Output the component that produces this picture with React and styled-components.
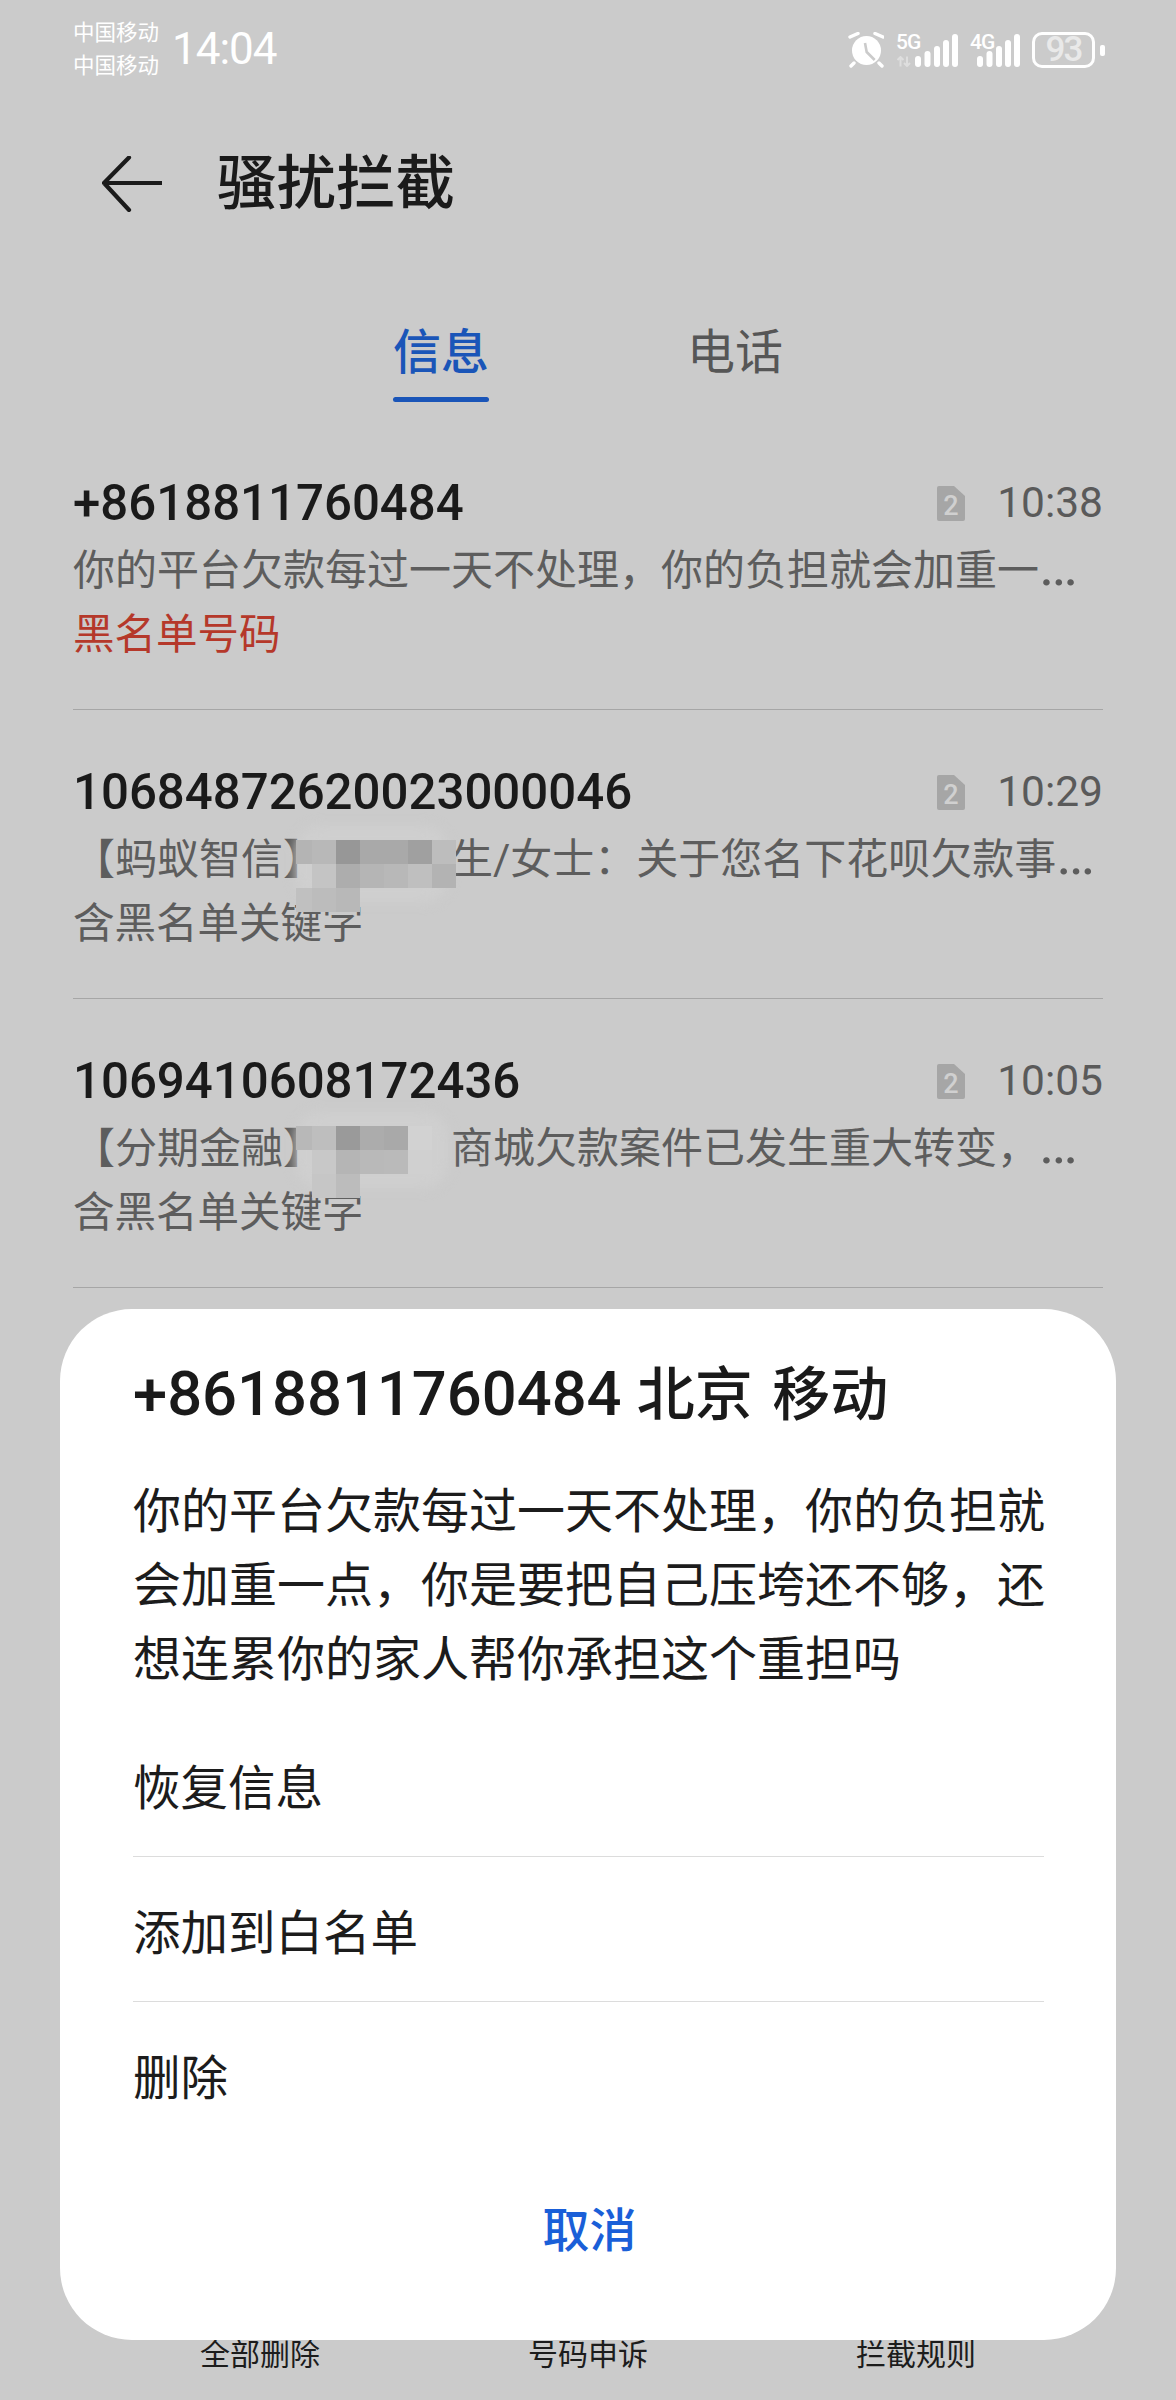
import styled, { createGlobalStyle } from "styled-components";

const __ = "transparent";

const threads = [
  {
    name: "+8618811760484",
    time: "10:38",
    tag: "黑名单号码",
    danger: true,
    lead: "你的平台欠款每过一天不处理，你的负担就会加重一",
  },
  {
    name: "10684872620023000046",
    time: "10:29",
    tag: "含黑名单关键字",
    lead: "【蚂蚁智信】",
    rest: "生/女士：关于您名下花呗欠款事",
    smudgeTop: 130,
    tiles: [
      "#b4b4b4", "#b8b8b8", "#979797", "#a9a9a9", "#a9a9a9", "#a0a0a0", "#bdbdbd",
      __, "#c4c4c4", "#adadad", "#b5b5b5", "#b8b8b8", "#bfbfbf", "#b3b3b3",
      "#c0c0c0", "#bcbcbc", "#b8b8b8", __, __, __, __,
    ],
  },
  {
    name: "1069410608172436",
    time: "10:05",
    tag: "含黑名单关键字",
    lead: "【分期金融】",
    rest: "商城欠款案件已发生重大转变，",
    smudgeTop: 127,
    tiles: [
      "#b8b8b8", "#bebebe", "#9a9a9a", "#acacac", "#a9a9a9", "#d2d2d2", __,
      __, "#c8c8c8", "#b5b5b5", "#b9b9b9", "#bababa", "#d0d0d0", __,
      __, "#c6c6c6", "#bcbcbc", __, __, __, __,
    ],
  },
];

const AlarmIcon = () => (
  <svg width="36" height="36" viewBox="0 0 36 36">
    <circle cx="18.500" cy="18.500" r="14.500" fill="#fff" />
    <path d="M17 11l1.700 9 8 8" fill="none" stroke="#cbcbcb" strokeWidth="2.600" />
    <path d="M2 5l8-3.500M35 5l-8-3.500M6 31l-3 3M31 31l3 3" stroke="#fff" strokeWidth="3.400" strokeLinecap="round" />
  </svg>
);

const SignalBars = () => (
  <svg width="43" height="33" viewBox="0 0 43 33">
    <rect x="0" y="22" width="6" height="11" rx="3" fill="#fff" />
    <rect x="9.500" y="17" width="6" height="16" rx="3" fill="#fff" />
    <rect x="19" y="12" width="6" height="21" rx="3" fill="#fff" />
    <rect x="28" y="6" width="6" height="27" rx="3" fill="#fff" />
    <rect x="37" y="0" width="6" height="33" rx="3" fill="#fff" />
  </svg>
);

const DataArrows = () => (
  <svg width="16" height="11" viewBox="0 0 16 11">
    <path d="M4.500 10.500V1M1.500 4l3-3 3 3M11 .5V10M8 7l3 3 3-3" fill="none" stroke="#dedede" strokeWidth="2" />
  </svg>
);

const SimIcon = () => (
  <svg width="28" height="35" viewBox="0 0 28 35">
    <path d="M2 0h15l11 10v23a2 2 0 0 1-2 2H2a2 2 0 0 1-2-2V2a2 2 0 0 1 2-2z" fill="#a6a6a6" />
    <text x="14" y="29" textAnchor="middle" fontSize="27" fontWeight="500" fontFamily="Roboto, sans-serif" fill="#d0d0d0">
      2
    </text>
  </svg>
);

const BackArrow = () => (
  <svg width="60" height="56" viewBox="0 0 60 56">
    <path d="M59 27H2M27 1.500 2 27l25 27" fill="none" stroke="#1b1b1b" strokeWidth="4.200" strokeLinecap="round" strokeLinejoin="round" />
  </svg>
);

export default function App() {
  return (
    <>
      <GlobalStyle />
      <Screen>
        <StatusBar>
          <Carriers>
            <span>中国移动</span>
            <span>中国移动</span>
          </Carriers>
          <Clock>14:04</Clock>
          <StatusIcons>
            <AlarmIcon />
            <SignalBox $width={62}>
              <SignalLabel>5G</SignalLabel>
              <ArrowSlot>
                <DataArrows />
              </ArrowSlot>
              <BarSlot>
                <SignalBars />
              </BarSlot>
            </SignalBox>
            <SignalBox $width={50}>
              <SignalLabel>4G</SignalLabel>
              <BarSlot>
                <SignalBars />
              </BarSlot>
            </SignalBox>
            <Battery>93</Battery>
          </StatusIcons>
        </StatusBar>

        <Header>
          <BackArrow />
          <Title>骚扰拦截</Title>
        </Header>

        <Tabs>
          <Tab $active>信息</Tab>
          <Tab>电话</Tab>
        </Tabs>

        <List>
          {threads.map((t) => (
            <Row key={t.time}>
              <RowTop>
                <Name>{t.name}</Name>
                <SimIcon />
                <Time>{t.time}</Time>
              </RowTop>
              <Preview>
                {t.lead}
                {t.rest && <MaskGap />}
                {t.rest}
                <Dots>…</Dots>
              </Preview>
              <Tag $danger={t.danger}>{t.tag}</Tag>
              {t.tiles && (
                <Smudge $top={t.smudgeTop}>
                  {t.tiles.map((tone, i) => (
                    <Tile key={i} $tone={tone} />
                  ))}
                </Smudge>
              )}
            </Row>
          ))}
        </List>

        <BottomBar>
          <BottomItem>全部删除</BottomItem>
          <BottomItem>号码申诉</BottomItem>
          <BottomItem>拦截规则</BottomItem>
        </BottomBar>

        <Dialog>
          <DialogTitle>
            +8618811760484 <Place>北京 移动</Place>
          </DialogTitle>
          <DialogBody>你的平台欠款每过一天不处理，你的负担就会加重一点，你是要把自己压垮还不够，还想连累你的家人帮你承担这个重担吗</DialogBody>
          <Actions>
            <Action>恢复信息</Action>
            <Action>添加到白名单</Action>
            <Action>删除</Action>
          </Actions>
          <Cancel>取消</Cancel>
        </Dialog>
      </Screen>
    </>
  );
}

const GlobalStyle = createGlobalStyle`
  html, body {
    margin: 0;
    padding: 0;
    background: #cbcbcb;
  }
  * {
    box-sizing: border-box;
  }
`;

const Screen = styled.div`
  position: relative;
  width: 1176px;
  height: 2400px;
  overflow: hidden;
  display: flex;
  flex-direction: column;
  background: #cbcbcb;
  font-family: Roboto, "Noto Sans CJK SC", sans-serif;
`;

const StatusBar = styled.div`
  height: 100px;
  padding: 16px 73px 0;
  display: flex;
  align-items: flex-start;
  color: #fff;
`;

const Carriers = styled.div`
  display: flex;
  flex-direction: column;
  font-size: 21.5px;
  line-height: 33px;
  width: 99px;
`;

const Clock = styled.div`
  font-size: 44px;
  line-height: 66px;
  letter-spacing: -1px;
`;

const StatusIcons = styled.div`
  margin-left: auto;
  display: flex;
  align-items: center;
  gap: 12px;
  height: 68px;
  margin-right: -2px;
`;

const SignalBox = styled.div`
  position: relative;
  width: ${({ $width }) => $width}px;
  height: 34px;
`;

const SignalLabel = styled.span`
  position: absolute;
  left: 0;
  top: 0;
  font-size: 21px;
  line-height: 18px;
  font-weight: 500;
  letter-spacing: -1px;
  color: #fff;
`;

const ArrowSlot = styled.div`
  position: absolute;
  left: 0;
  bottom: 0;
  line-height: 0;
`;

const BarSlot = styled.div`
  position: absolute;
  right: 0;
  bottom: 0;
  line-height: 0;
`;

const Battery = styled.div`
  position: relative;
  width: 63px;
  height: 36px;
  border: 3px solid #fff;
  border-radius: 10px;
  color: #e9e9e9;
  font-size: 35px;
  line-height: 30px;
  letter-spacing: -2px;
  font-weight: 500;
  text-align: center;
  margin-right: 10px;

  &::after {
    content: "";
    position: absolute;
    right: -13px;
    top: 10px;
    width: 5px;
    height: 11px;
    border-radius: 2px;
    background: #fff;
  }
`;

const Header = styled.div`
  height: 88px;
  margin-top: 40px;
  padding-left: 102px;
  display: flex;
  align-items: center;
  gap: 55px;
`;

const Title = styled.h1`
  margin: 0;
  font-size: 59.5px;
  line-height: 88px;
  font-weight: 500;
  color: #1a1a1a;
`;

const Tabs = styled.div`
  margin-top: 95px;
  padding-left: 393px;
  display: flex;
  gap: 198px;
`;

const Tab = styled.div`
  position: relative;
  font-size: 48px;
  line-height: 60px;
  height: 84px;
  font-weight: ${({ $active }) => ($active ? 500 : 400)};
  color: ${({ $active }) => ($active ? "#1a55b8" : "#565656")};

  &::after {
    content: "";
    display: ${({ $active }) => ($active ? "block" : "none")};
    position: absolute;
    left: 0;
    right: 0;
    bottom: 5px;
    height: 5px;
    border-radius: 3px;
    background: #1a55b8;
  }
`;

const List = styled.div`
  margin: 0 73px;
  padding-top: 14px;
`;

const Row = styled.div`
  position: relative;
  height: 289px;
  padding-top: 57px;
  border-bottom: 1px solid #a6a6a6;
`;

const RowTop = styled.div`
  display: flex;
  align-items: center;
  height: 50px;
`;

const Name = styled.div`
  flex: 1;
  font-size: 49.2px;
  line-height: 50px;
  font-weight: 500;
  color: #1a1a1a;
`;

const Time = styled.div`
  margin-left: 32px;
  font-size: 42.5px;
  line-height: 50px;
  color: #5a5a5a;
`;

const Preview = styled.div`
  margin-top: 11px;
  font-size: 42px;
  line-height: 64px;
  color: #5d5d5d;
  white-space: nowrap;
`;

const Dots = styled.span`
  font-size: 58px;
  line-height: 0;
`;

const MaskGap = styled.span`
  display: inline-block;
  width: 126px;
`;

const Tag = styled.div`
  font-size: 41.5px;
  line-height: 64px;
  color: ${({ $danger }) => ($danger ? "#b5382a" : "#5d5d5d")};
`;

const Smudge = styled.div`
  position: absolute;
  left: 223px;
  top: ${({ $top }) => $top}px;
  isolation: isolate;
  display: grid;
  grid-template-columns: 16px repeat(6, 24px);
  grid-auto-rows: 24px;

  &::before {
    content: "";
    position: absolute;
    z-index: -1;
    inset: -14px 8px 10px 0;
    border-radius: 24px;
    background: #cfcfcf;
    filter: blur(6px);
  }
`;

const Tile = styled.div`
  background: ${({ $tone }) => $tone};
`;

const BottomBar = styled.div`
  margin-top: auto;
  padding: 0 96px 30px;
  display: grid;
  grid-template-columns: repeat(3, 328px);
`;

const BottomItem = styled.div`
  text-align: center;
  font-size: 30px;
  line-height: 30px;
  color: #1c1c1c;
`;

const Dialog = styled.div`
  position: absolute;
  left: 60px;
  top: 1309px;
  width: 1056px;
  height: 1031px;
  padding: 46px 70px 0 73px;
  border-radius: 72px;
  background: #fff;
`;

const DialogTitle = styled.div`
  font-size: 61.5px;
  line-height: 78px;
  font-weight: 500;
  color: #1a1a1a;
  white-space: nowrap;
`;

const Place = styled.span`
  font-size: 58px;
  word-spacing: 5px;
`;

const DialogBody = styled.p`
  margin: 41px 0 0;
  font-size: 48px;
  line-height: 74px;
  color: #1c1c1c;
`;

const Actions = styled.div`
  margin-top: 15px;
  margin-right: 2px;
`;

const Action = styled.div`
  height: 145px;
  display: flex;
  align-items: center;
  font-size: 47.5px;
  color: #1c1c1c;
  border-bottom: 1px solid #dcdcdc;

  &:last-child {
    border-bottom: none;
  }
`;

const Cancel = styled.div`
  margin-top: 54px;
  text-align: center;
  font-size: 47px;
  line-height: 60px;
  font-weight: 500;
  color: #1a5fd8;
`;
